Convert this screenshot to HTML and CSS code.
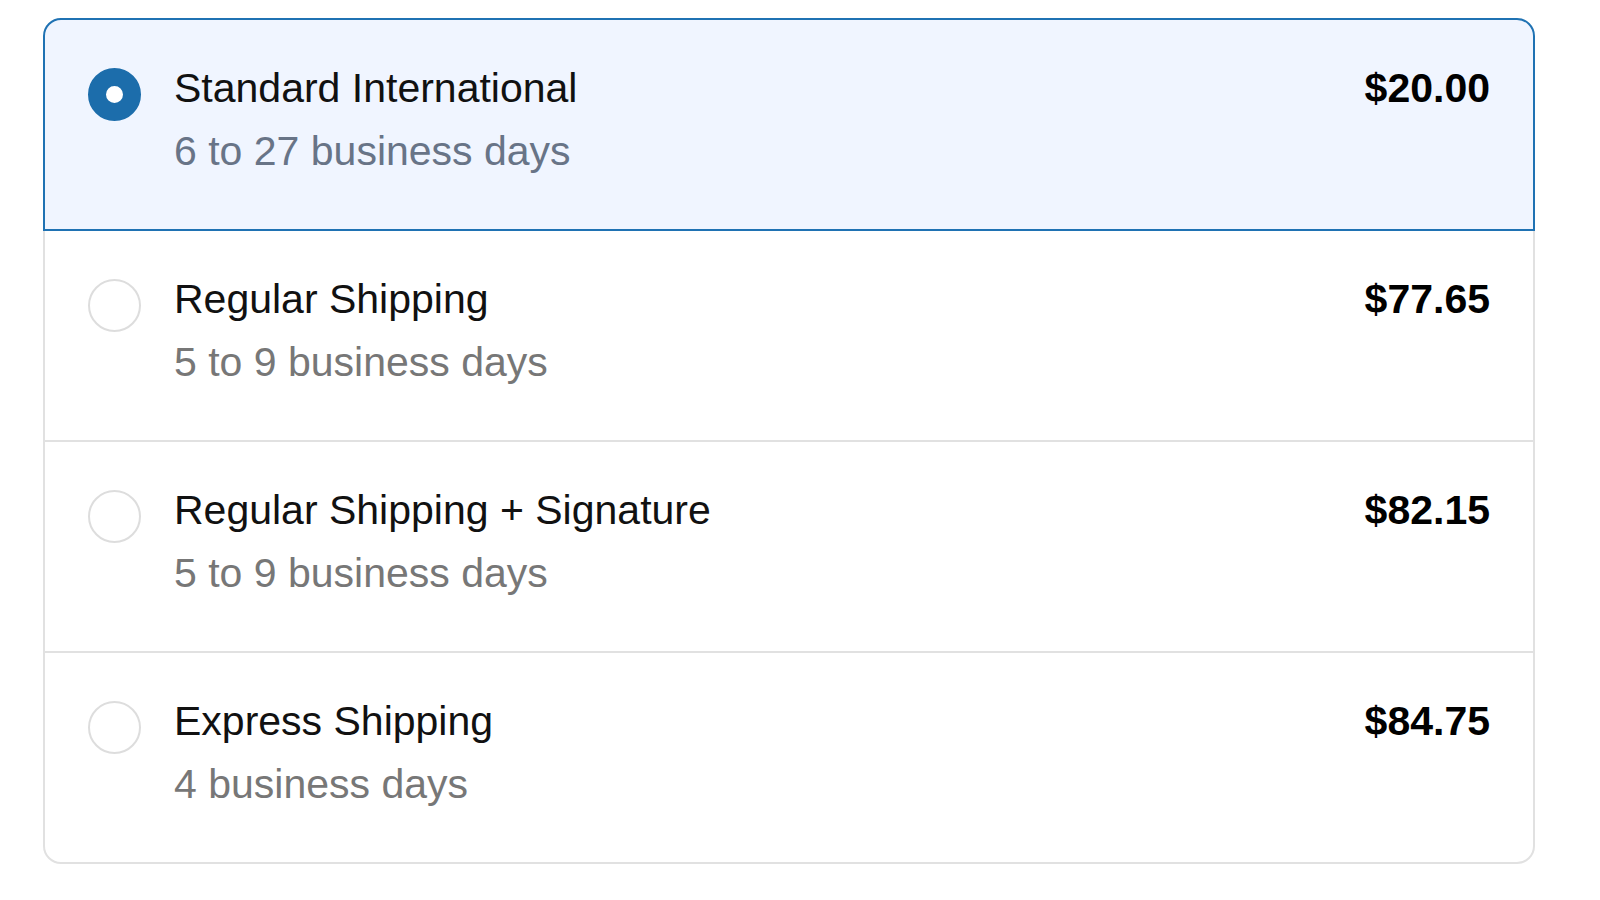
FILE: index.html
```html
<!DOCTYPE html>
<html>
<head>
    <title>Shipping Method</title>
    <link rel="stylesheet" href="styles.css">
</head>
<body>
    <ul class="shipping-options">
        <li class="option selected">
            <span class="radio"></span>
            <div class="info">
                <div class="name">Standard International</div>
                <div class="days">6 to 27 business days</div>
            </div>
            <div class="price">$20.00</div>
        </li>
        <li class="option">
            <span class="radio"></span>
            <div class="info">
                <div class="name">Regular Shipping</div>
                <div class="days">5 to 9 business days</div>
            </div>
            <div class="price">$77.65</div>
        </li>
        <li class="option">
            <span class="radio"></span>
            <div class="info">
                <div class="name">Regular Shipping + Signature</div>
                <div class="days">5 to 9 business days</div>
            </div>
            <div class="price">$82.15</div>
        </li>
        <li class="option">
            <span class="radio"></span>
            <div class="info">
                <div class="name">Express Shipping</div>
                <div class="days">4 business days</div>
            </div>
            <div class="price">$84.75</div>
        </li>
    </ul>
</body>
</html>
```

FILE: styles.css
```css
body {
    margin: 0;
    background-color: #ffffff;
    font-family: "Liberation Sans", Arial, sans-serif;
}

.shipping-options {
    list-style: none;
    width: 1492px;
    margin: 18px 0 0 43px;
    padding: 0;
}

.option {
    display: flex;
    align-items: flex-start;
    height: 213px;
    box-sizing: border-box;
    padding: 37px 43px 0 43px;
    margin-top: -2px;
    border: 2px solid #e1e1e1;
    background-color: #ffffff;
}

.option:first-child {
    margin-top: 0;
    border-radius: 18px 18px 0 0;
}

.option:last-child {
    border-radius: 0 0 18px 18px;
}

.option.selected {
    position: relative;
    z-index: 1;
    border-color: #1f72b3;
    background-color: #f0f5ff;
}

.radio {
    flex: none;
    width: 53px;
    height: 53px;
    margin-top: 11px;
    margin-right: 33px;
    box-sizing: border-box;
    border: 2px solid #dddddd;
    border-radius: 50%;
    background-color: #ffffff;
}

.selected .radio {
    border: 18px solid #1c6dab;
}

.info {
    flex: 1;
    font-size: 41px;
    line-height: 63px;
}

.name {
    color: #111111;
}

.days {
    color: #777777;
}

.selected .days {
    color: #687487;
}

.price {
    font-size: 41px;
    line-height: 63px;
    font-weight: bold;
    color: #000000;
}
```
